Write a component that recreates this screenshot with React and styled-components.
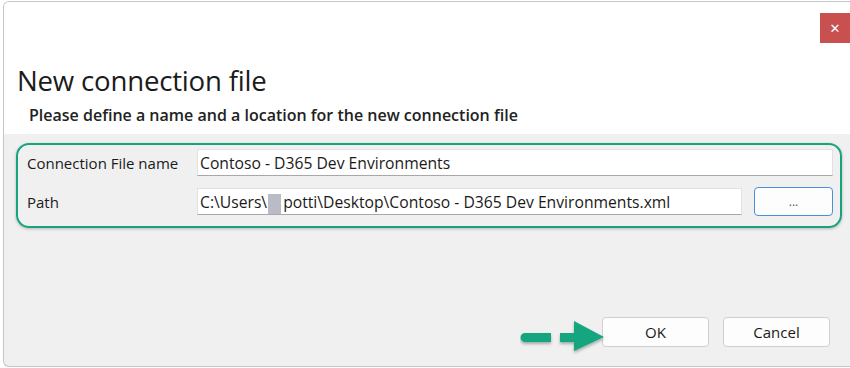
import React from "react";
import styled, { createGlobalStyle } from "styled-components";

const Global = createGlobalStyle`
  html, body { margin: 0; padding: 0; background: #ffffff; }
  body { font-family: "Open Sans", "Noto Sans", sans-serif; overflow: hidden; }
`;

const Page = styled.div`
  width: 850px;
  height: 368px;
  padding: 1px 0 0 3px;
  box-sizing: border-box;
`;

const Window = styled.div`
  width: 847px;
  height: 366px;
  box-sizing: border-box;
  border: 1px solid #c6c6c6;
  border-right: none;
  border-radius: 6px 0 0 6px;
  overflow: hidden;
  display: flex;
  flex-direction: column;
  background: #f0f0f0;
`;

const Header = styled.div`
  background: #ffffff;
  height: 132px;
  display: flex;
  flex-direction: column;
  padding-top: 11px;
  box-sizing: border-box;
`;

const TitleBar = styled.div`
  display: flex;
  justify-content: flex-end;
  height: 30px;
`;

const CloseButton = styled.div`
  width: 30px;
  height: 30px;
  background: #c8504f;
  color: #ffffff;
  display: flex;
  align-items: center;
  justify-content: center;
  font-family: "DejaVu Sans", sans-serif;
  font-weight: bold;
  font-size: 13px;
`;

const Title = styled.div`
  margin: 20px 0 0 13px;
  font-size: 27.6px;
  line-height: 34px;
  color: #1b1b1b;
  letter-spacing: -0.2px;
`;

const Subtitle = styled.div`
  margin: 8px 0 0 25px;
  font-size: 16px;
  font-weight: 600;
  line-height: 20px;
  color: #222222;
`;

const Body = styled.div`
  flex: 1;
  display: flex;
  flex-direction: column;
  padding: 9px 0 0 12px;
`;

const Highlight = styled.div`
  width: 826px;
  height: 85px;
  box-sizing: border-box;
  border: 2.5px solid #17a47c;
  border-radius: 13px;
  box-shadow: 0 1px 3px rgba(0, 0, 0, 0.25);
  padding: 4px 7px 0 9px;
  display: grid;
  grid-template-columns: 170px 1fr;
  align-content: start;
  row-gap: 11px;
  align-items: center;
`;

const Label = styled.div`
  font-family: "Open Sans", sans-serif;
  font-size: 15px;
  color: #1a1a1a;
`;

const FieldRow = styled.div`
  display: flex;
  gap: 12px;
  align-items: center;
`;

const TextBox = styled.div`
  flex: 1;
  height: 27px;
  box-sizing: border-box;
  background: #ffffff;
  border: 1px solid #e1e1e1;
  border-bottom: 1.5px solid #a8a8a8;
  display: flex;
  align-items: center;
  padding-left: 2px;
  font-size: 15.7px;
  color: #1a1a1a;
  white-space: nowrap;
  overflow: hidden;
`;

const Redact = styled.span`
  display: inline-block;
  width: 13px;
  height: 21px;
  margin: 5px 2px 0 1px;
  background: #b9bcc6;
  vertical-align: bottom;
`;

const BrowseButton = styled.div`
  width: 79px;
  height: 29px;
  box-sizing: border-box;
  border: 1.5px solid #4a90d9;
  border-radius: 4px;
  background: #fdfdfd;
  display: flex;
  align-items: flex-end;
  justify-content: center;
  padding-bottom: 5px;
  font-size: 12px;
  color: #555;
`;

const Footer = styled.div`
  margin-top: auto;
  display: flex;
  align-items: center;
  justify-content: flex-end;
  padding: 0 20px 11px 0;
`;

const Arrow = styled.svg`
  margin: 8px -4px 0 0;
  position: relative;
  z-index: 1;
`;

const Button = styled.div`
  width: 107px;
  height: 30px;
  box-sizing: border-box;
  border: 1px solid #cfcfcf;
  border-radius: 4px;
  background: #fdfdfd;
  display: flex;
  align-items: center;
  justify-content: center;
  font-size: 15px;
  color: #1a1a1a;
  margin-left: ${(p) => p.$gap || 0}px;
`;

export default function App() {
  return (
    <Page>
      <Global />
      <Window>
        <Header>
          <TitleBar>
            <CloseButton>✕</CloseButton>
          </TitleBar>
          <Title>New connection file</Title>
          <Subtitle>Please define a name and a location for the new connection file</Subtitle>
        </Header>
        <Body>
          <Highlight>
            <Label>Connection File name</Label>
            <TextBox>Contoso - D365 Dev Environments</TextBox>
            <Label>Path</Label>
            <FieldRow>
              <TextBox>
                C:\Users\<Redact />potti\Desktop\Contoso - D365 Dev Environments.xml
              </TextBox>
              <BrowseButton>...</BrowseButton>
            </FieldRow>
          </Highlight>
          <Footer>
            <Arrow width="86" height="38" viewBox="0 0 86 38">
              <defs>
                <filter id="sh" x="-20%" y="-20%" width="140%" height="160%">
                  <feDropShadow dx="0" dy="2" stdDeviation="1.5" floodColor="#000" floodOpacity="0.3" />
                </filter>
              </defs>
              <g filter="url(#sh)" fill="#13a67f">
                <path d="M5 16 H31 V25 H5 A4.5 4.5 0 0 1 5 16 Z" />
                <path d="M40 16 H54 V4 L84 20 L54 34 V25 H40 Z" />
              </g>
            </Arrow>
            <Button>OK</Button>
            <Button $gap={14}>Cancel</Button>
          </Footer>
        </Body>
      </Window>
    </Page>
  );
}
